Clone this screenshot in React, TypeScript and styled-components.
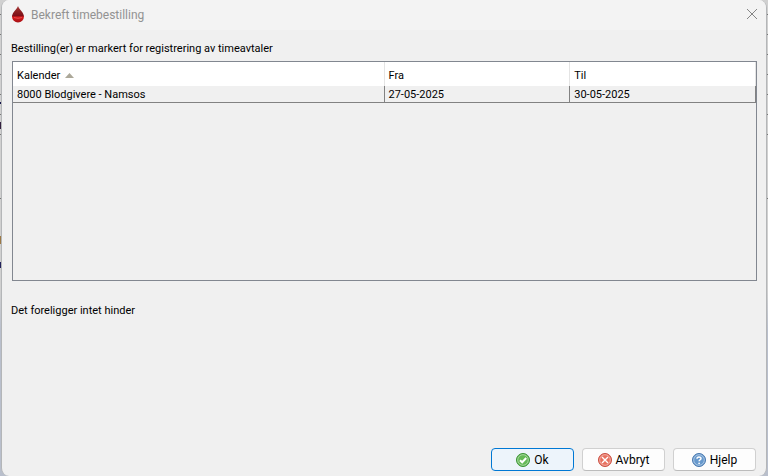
import React from "react";
import styled, { createGlobalStyle } from "styled-components";

const GlobalStyle = createGlobalStyle`
  * { box-sizing: border-box; }
  html, body, #root { height: 100%; }
  body {
    margin: 0;
    font-family: Roboto, "Noto Sans", sans-serif;
    font-size: 11px;
    line-height: 16px;
    color: #000;
  }
`;

const Backdrop = styled.div`
  min-height: 100%;
  display: flex;
  padding: 0 1px;
  background:
    linear-gradient(#15154a, #15154a) 0 102px / 1px 2px no-repeat,
    linear-gradient(#33203f, #33203f) 0 122px / 1px 7px no-repeat,
    linear-gradient(#9b7845, #9b7845) 0 236px / 1px 8px no-repeat,
    linear-gradient(#22225c, #22225c) 0 262px / 1px 6px no-repeat,
    repeating-linear-gradient(transparent 0 14px, #777 14px 15px, transparent 15px 20px) 0 0 / 100% 140px no-repeat,
    linear-gradient(#777, #777) 0 198px / 100% 1px no-repeat,
    linear-gradient(#d0d0d0 0 290px, #b9bfcc 330px);
`;

const Dialog = styled.section`
  flex: 1;
  min-width: 0;
  display: flex;
  flex-direction: column;
  border: solid #b4b6b8;
  border-width: 0 1px;
  border-radius: 8px;
  overflow: hidden;
  background: #f0f0f0;
`;

const TitleBar = styled.header`
  display: flex;
  align-items: center;
  gap: 6px;
  height: 30px;
  padding: 0 8px 0 9px;
  background: #f3f3f3;
`;

const Title = styled.h1`
  flex: 1;
  margin: 0;
  font-weight: 400;
  font-size: 12px;
  color: #929292;
`;

const CloseButton = styled.button`
  display: flex;
  padding: 0 0 2px;
  border: 0;
  background: none;
`;

const Content = styled.main`
  flex: 1;
  display: flex;
  flex-direction: column;
  padding: 11px 9px 5px;
`;

const Message = styled.p`
  margin: 0;
`;

const TablePanel = styled.div`
  min-height: 220px;
  margin: 4px 0 22px 1px;
  border: 1px solid #828790;
`;

const Table = styled.table`
  width: 100%;
  table-layout: fixed;
  border-collapse: separate;
  border-spacing: 0;
`;

const HeadCell = styled.th<{ $width: string }>`
  width: ${(p) => p.$width};
  height: 24px;
  padding: 4px 4px 0;
  border-right: 1px solid #e4e4e4;
  background: #fff;
  font-weight: 400;
  text-align: left;
`;

const Cell = styled.td`
  height: 17px;
  padding: 1px 4px 0;
  border: solid #828282;
  border-width: 0 1px 1px 0;
  line-height: 15px;
`;

const SortArrow = styled.svg`
  margin-left: 5px;
  vertical-align: 1px;
`;

const Actions = styled.footer`
  display: flex;
  justify-content: flex-end;
  gap: 8px;
  margin-top: auto;
  padding-right: 1px;
`;

const ActionButton = styled.button<{ $primary?: boolean }>`
  display: flex;
  align-items: center;
  justify-content: center;
  gap: 4px;
  width: 83px;
  height: 23px;
  padding: 0;
  border: 1px solid ${(p) => (p.$primary ? "#0078d4" : "#d0d0d0")};
  border-bottom-color: ${(p) => (p.$primary ? "#0078d4" : "#bcbcbc")};
  border-radius: 4px;
  background: ${(p) => (p.$primary ? "#edf4fb" : "#fdfdfd")};
  color: #000;
  font: inherit;
  font-size: 12px;
`;

const DropIcon = () => (
  <svg width="14" height="18" viewBox="0 0 14 18" aria-hidden="true">
    <defs>
      <linearGradient id="blood" x1="0" y1="0" x2="0" y2="1">
        <stop offset="0" stopColor="#a83a3a" />
        <stop offset=".35" stopColor="#8c2020" />
        <stop offset=".58" stopColor="#7e1018" />
        <stop offset=".68" stopColor="#d91a1a" />
        <stop offset="1" stopColor="#a51218" />
      </linearGradient>
    </defs>
    <path d="M7 0C6 3 1 6.8 1 10.6a6 5.8 0 0 0 12 0C13 6.8 8 3 7 0Z" fill="url(#blood)" />
    <path d="M3 11.5q4 1.6 8 0" fill="none" stroke="#f06060" strokeOpacity=".7" />
  </svg>
);

type IconKind = "ok" | "cancel" | "help";
const iconColors: Record<IconKind, [string, string]> = {
  ok: ["#399334", "#65b957"],
  cancel: ["#c94e42", "#e87160"],
  help: ["#4777ae", "#6799cd"],
};

const ActionIcon = ({ kind }: { kind: IconKind }) => (
  <svg width="14" height="14" viewBox="0 0 14 14" fill="none" aria-hidden="true">
    <circle cx="7" cy="7" r="6.5" fill={iconColors[kind][1]} stroke={iconColors[kind][0]} />
    <circle cx="7" cy="7" r="5.3" stroke="#fff" strokeOpacity=".55" strokeWidth=".8" />
    {kind === "ok" && <path d="m4 7.3 2.2 2 4-4.3" stroke="#fff" strokeWidth="2" />}
    {kind === "cancel" && <path d="m4 4 6 6m0-6-6 6" stroke="#fff" strokeWidth="1.4" />}
    {kind === "help" && (
      <>
        <path d="M5 5.7C5 3.2 9.1 3.4 9 5.5 9 6.7 7.1 6.8 7.1 8.3" stroke="#fff" strokeWidth="1.5" />
        <circle cx="7.1" cy="10.3" r=".9" fill="#fff" />
      </>
    )}
  </svg>
);

const columns = [
  { label: "Kalender", width: "50%", sorted: true },
  { label: "Fra", width: "25%" },
  { label: "Til", width: "25%" },
];
const rows = [["8000 Blodgivere - Namsos", "27-05-2025", "30-05-2025"]];
const actions: { kind: IconKind; label: string }[] = [
  { kind: "ok", label: "Ok" },
  { kind: "cancel", label: "Avbryt" },
  { kind: "help", label: "Hjelp" },
];

export default function App() {
  return (
    <>
      <GlobalStyle />
      <Backdrop>
        <Dialog role="dialog" aria-labelledby="dialog-title">
          <TitleBar>
            <DropIcon />
            <Title id="dialog-title">Bekreft timebestilling</Title>
            <CloseButton type="button" aria-label="Lukk">
              <svg width="12" height="12" viewBox="0 0 12 12" aria-hidden="true">
                <path d="m1 1 10 10M11 1 1 11" stroke="#858585" />
              </svg>
            </CloseButton>
          </TitleBar>
          <Content>
            <Message>Bestilling(er) er markert for registrering av timeavtaler</Message>
            <TablePanel>
              <Table>
                <thead>
                  <tr>
                    {columns.map((c) => (
                      <HeadCell key={c.label} $width={c.width} scope="col">
                        {c.label}
                        {c.sorted && (
                          <SortArrow width="9" height="5" viewBox="0 0 9 5" aria-hidden="true">
                            <path d="M4.5 0 9 5H0Z" fill="#aca899" />
                          </SortArrow>
                        )}
                      </HeadCell>
                    ))}
                  </tr>
                </thead>
                <tbody>
                  {rows.map((r) => (
                    <tr key={r[0]}>
                      {r.map((v) => (
                        <Cell key={v}>{v}</Cell>
                      ))}
                    </tr>
                  ))}
                </tbody>
              </Table>
            </TablePanel>
            <Message>Det foreligger intet hinder</Message>
            <Actions>
              {actions.map((a) => (
                <ActionButton key={a.kind} type="button" $primary={a.kind === "ok"}>
                  <ActionIcon kind={a.kind} />
                  {a.label}
                </ActionButton>
              ))}
            </Actions>
          </Content>
        </Dialog>
      </Backdrop>
    </>
  );
}
